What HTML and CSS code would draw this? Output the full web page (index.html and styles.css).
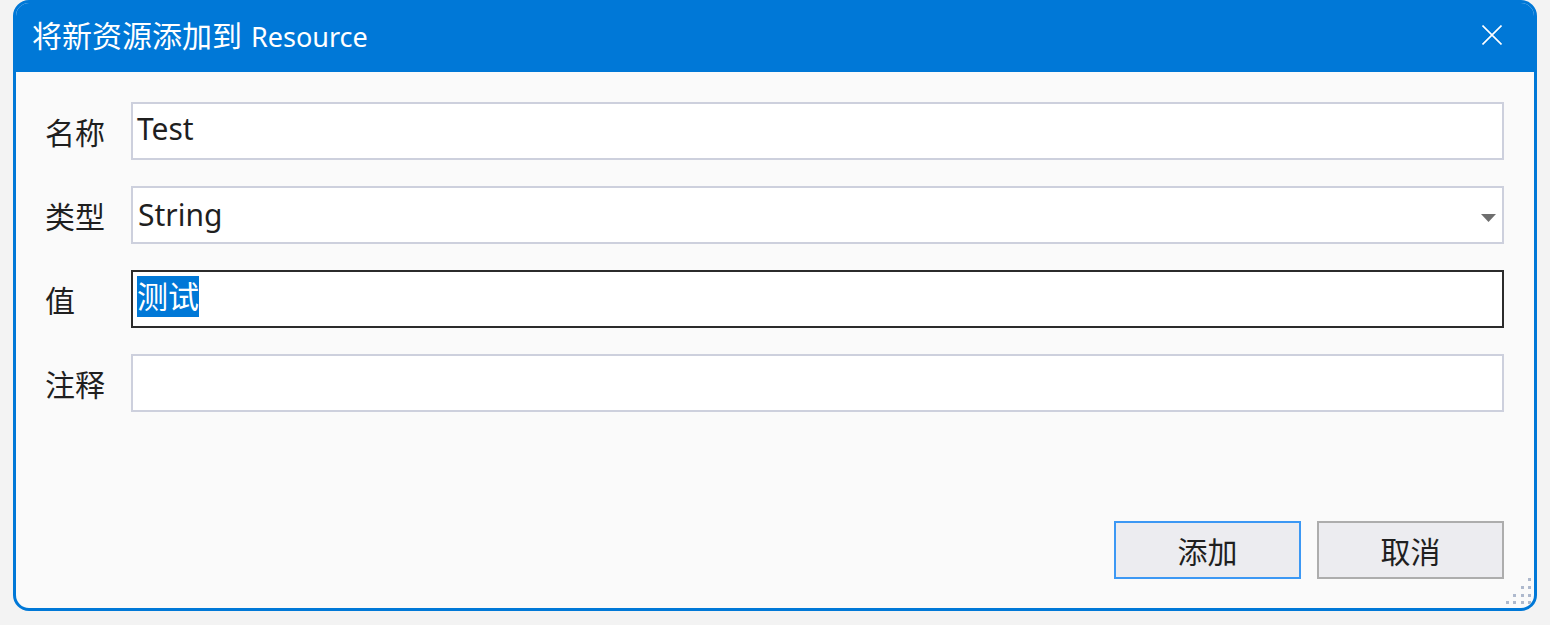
FILE: index.html
```html
<!DOCTYPE html>
<html lang="zh-CN">
<head>
<meta charset="utf-8">
<title>将新资源添加到 Resource</title>
<link rel="stylesheet" href="styles.css">
</head>
<body>
<div class="window">
  <div class="titlebar">
    <div class="title"><span class="cjk">将新资源添加到</span> Resource</div>
    <svg class="close" width="20" height="20" viewBox="0 0 20 20">
      <path d="M0.5 0.5 L19.5 19.5 M19.5 0.5 L0.5 19.5" stroke="#ffffff" stroke-width="1.6" fill="none"/>
    </svg>
  </div>
  <div class="client">
    <div class="form">
      <div class="label">名称</div>
      <div class="field">Test</div>
      <div class="label">类型</div>
      <div class="field combo"><span>String</span>
        <svg class="arrow" width="15" height="8" viewBox="0 0 15 8"><path d="M0 0 H15 L7.5 8 Z" fill="#6e6e6e"/></svg>
      </div>
      <div class="label">值</div>
      <div class="field focused"><span class="sel">测试</span></div>
      <div class="label">注释</div>
      <div class="field"></div>
    </div>
    <div class="buttons">
      <div class="btn default">添加</div>
      <div class="btn">取消</div>
    </div>
    <svg class="grip" width="30" height="32" viewBox="0 0 30 32">
      <g fill="#aeb9cd">
        <rect x="24" y="2" width="3" height="3"/>
        <rect x="17" y="10" width="3" height="3"/><rect x="24" y="10" width="3" height="3"/>
        <rect x="9" y="18" width="3" height="3"/><rect x="17" y="18" width="3" height="3"/><rect x="24" y="18" width="3" height="3"/>
        <rect x="2" y="25" width="3" height="3"/><rect x="9" y="25" width="3" height="3"/><rect x="17" y="25" width="3" height="3"/><rect x="24" y="25" width="3" height="3"/>
      </g>
    </svg>
  </div>
</div>
</body>
</html>
```
FILE: styles.css
```css
html, body {
  margin: 0;
  padding: 0;
  background: #f3f3f3;
}
body {
  width: 1550px;
  height: 625px;
  font-family: "Noto Sans", "Noto Sans CJK SC", sans-serif;
  color: #1f1f1f;
}
.window {
  box-sizing: border-box;
  margin-left: 13px;
  width: 1524px;
  height: 611px;
  border: 3px solid #0078d7;
  border-radius: 16px;
  background: #fafafa;
  overflow: hidden;
  display: flex;
  flex-direction: column;
  position: relative;
}
.titlebar {
  height: 69px;
  flex: 0 0 69px;
  background: #0078d7;
  display: flex;
  justify-content: space-between;
  align-items: flex-start;
  padding-left: 16px;
  padding-right: 32px;
}
.title {
  color: #ffffff;
  font-size: 27px;
  line-height: 40px;
  padding-top: 11px;
  white-space: nowrap;
}
.title .cjk {
  font-size: 30px;
  font-family: "Noto Sans CJK SC", sans-serif;
  margin-right: 2px;
}
.close {
  margin-top: 22px;
}
.client {
  flex: 1;
  display: flex;
  flex-direction: column;
  justify-content: space-between;
  padding: 30px 30px 29px 29px;
}
.form {
  display: grid;
  grid-template-columns: 86px 1fr;
  row-gap: 26px;
}
.label {
  height: 58px;
  line-height: 58px;
  font-size: 30px;
  font-family: "Noto Sans CJK SC", sans-serif;
  box-sizing: border-box;
  color: #1f1f1f;
}
.field {
  box-sizing: border-box;
  height: 58px;
  border: 2px solid #cdd0dd;
  background: #ffffff;
  font-size: 30px;
  line-height: 41px;
  padding: 4px 6px 0 4px;
  white-space: nowrap;
  display: flex;
  align-items: flex-start;
}
.field > span, .field {
  color: #1f1f1f;
}
.field.focused {
  border-color: #2b2b2b;
}
.sel {
  background: #0078d7;
  color: #ffffff !important;
  font-size: 31px;
}
.combo {
  justify-content: space-between;
}
.combo > span {
  padding-left: 1px;
  padding-top: 2px;
}
.arrow {
  margin-top: 22px;
}
.buttons {
  display: flex;
  justify-content: flex-end;
  gap: 16px;
}
.btn {
  box-sizing: border-box;
  width: 187px;
  height: 58px;
  border: 2px solid #adadad;
  background: #ececf0;
  font-size: 30px;
  font-family: "Noto Sans CJK SC", sans-serif;
  line-height: 54px;
  text-align: center;
  color: #1f1f1f;
}
.btn.default {
  border-color: #3c98f4;
}
.grip {
  position: absolute;
  left: 1488px;
  top: 573px;
}
```
